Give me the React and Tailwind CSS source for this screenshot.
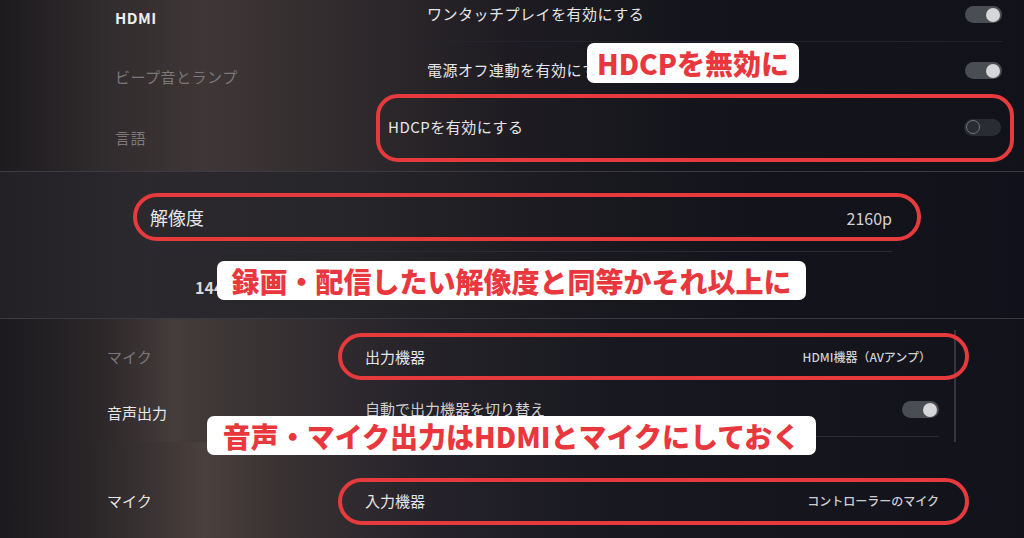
import React from 'react'

function Toggle({ on }) {
    if (on) {
        return (
            <div className="w-[37px] h-[17px] rounded-full bg-[#4b4d54] flex items-center justify-end pr-[2px] shrink-0">
                <div className="w-[14px] h-[14px] rounded-full bg-[#d6d6d8]"></div>
            </div>
        )
    }
    return (
        <div className="w-[37px] h-[17px] rounded-full bg-[#2a2c33] flex items-center pl-[2px] shrink-0">
            <div className="w-[14px] h-[14px] rounded-full border border-[#74767d]"></div>
        </div>
    )
}

function Callout({ className, children }) {
    return (
        <div className={`absolute bg-white rounded-[7px] flex items-center justify-center text-[28px] leading-none font-black text-[#e8383d] whitespace-nowrap ${className}`}>
            {children}
        </div>
    )
}

export default function App() {
    return (
        <div className="relative w-[1024px] h-[538px] overflow-hidden bg-[#11121a] font-['Noto_Sans_CJK_JP',sans-serif] text-[#e6e6e8]">
            {/* HDMI settings */}
            <section className="h-[171px] flex bg-[linear-gradient(90deg,#1d1b1e_0%,#302b2d_10%,#3f3737_20%,#322c2e_32%,#1e1c22_50%,#14151c_68%,#11121a_100%)]">
                <div className="w-[376px] pl-[115px] flex flex-col text-[15px] tracking-[0.5px]">
                    <div className="mt-[4px] h-[28px] flex items-center font-bold text-[#eeeeee]">HDMI</div>
                    <div className="mt-[31px] h-[28px] flex items-center text-[#7c7878]">ビープ音とランプ</div>
                    <div className="mt-[33px] h-[28px] flex items-center text-[#7c7878]">言語</div>
                </div>
                <div className="flex-1 flex flex-col text-[15px] tracking-[0.5px]">
                    <div className="ml-[51px] mr-[22px] h-[42px] pb-[12px] flex items-center justify-between border-b border-[#24252c]">
                        <span>ワンタッチプレイを有効にする</span>
                        <Toggle on />
                    </div>
                    <div className="ml-[51px] mr-[22px] h-[57px] flex items-center justify-between">
                        <span>電源オフ連動を有効にする</span>
                        <Toggle on />
                    </div>
                    <div className="ml-[12px] mr-[23px] h-[56px] flex items-center justify-between">
                        <span>HDCPを有効にする</span>
                        <Toggle />
                    </div>
                </div>
            </section>
            <div className="h-px bg-[#3a3a40]"></div>

            {/* Video output */}
            <section className="h-[146px] pl-[150px] pr-[132px] flex flex-col bg-[linear-gradient(90deg,#232125_0%,#2b292d_14%,#262529_35%,#1a1a20_55%,#13141b_75%,#10111a_100%)]">
                <div className="h-[80px] pt-[12px] flex items-center justify-between border-b border-[#2a2b32]">
                    <span className="text-[18px]">解像度</span>
                    <span className="text-[16px] text-[#d2d2d4]">2160p</span>
                </div>
                <div className="pl-[45px] h-[66px] pt-[4px] flex items-center text-[16px] font-semibold text-[#d8d8da]">1440p</div>
            </section>
            <div className="h-px bg-[#3a3a40]"></div>

            {/* Audio output */}
            <section className="h-[123px] flex bg-[linear-gradient(90deg,#1b1a1e_0%,#2c2729_10%,#453c3b_17%,#3a3434_24%,#26232a_40%,#181920_60%,#11121a_100%)]">
                <div className="w-[365px] pl-[107px] flex flex-col text-[15px]">
                    <div className="mt-[24px] h-[28px] flex items-center text-[#7c7878]">マイク</div>
                    <div className="mt-[28px] h-[28px] flex items-center">音声出力</div>
                </div>
                <div className="w-[574px] flex flex-col">
                    <div className="mt-[14px] h-[48px] flex items-center justify-between">
                        <span className="text-[15px]">出力機器</span>
                        <span className="text-[12px] font-medium text-[#cfcfd2] mr-[8px]">HDMI機器（AVアンプ）</span>
                    </div>
                    <div className="h-[56px] pt-[2px] flex items-center justify-between border-b border-[#2a2b33]">
                        <span className="text-[15px] text-[#d0d0d2]">自動で出力機器を切り替え</span>
                        <Toggle on />
                    </div>
                </div>
                <div className="ml-[15px] mt-[11px] w-[2px] bg-[#34363d]"></div>
            </section>

            {/* Microphone */}
            <section className="h-[96px] flex bg-[linear-gradient(90deg,#1c1a1e_0%,#2a2628_9%,#3e3636_16%,#4a403e_20%,#3a3333_27%,#25222a_42%,#181920_60%,#11121a_100%)]">
                <div className="w-[365px] pl-[107px] flex items-center text-[15px] pt-[22px]">マイク</div>
                <div className="w-[574px] flex items-center justify-between pt-[22px]">
                    <span className="text-[15px]">入力機器</span>
                    <span className="text-[12px] font-medium text-[#cfcfd2]">コントローラーのマイク</span>
                </div>
            </section>

            {/* Annotations */}
            <div className="absolute left-[376px] top-[94px] w-[638px] h-[68px] border-4 border-[#e63a3c] rounded-[22px]"></div>
            <div className="absolute left-[133px] top-[193px] w-[788px] h-[48px] border-4 border-[#e63a3c] rounded-[24px]"></div>
            <div className="absolute left-[338px] top-[333px] w-[631px] h-[47px] border-4 border-[#e63a3c] rounded-[24px]"></div>
            <div className="absolute left-[338px] top-[478px] w-[631px] h-[47px] border-4 border-[#e63a3c] rounded-[24px]"></div>

            <Callout className="left-[587px] top-[43px] w-[212px] h-[40px]">HDCPを無効に</Callout>
            <Callout className="left-[217px] top-[261px] w-[589px] h-[39px]">録画・配信したい解像度と同等かそれ以上に</Callout>
            <Callout className="left-[207px] top-[416px] w-[609px] h-[39px]">音声・マイク出力はHDMIとマイクにしておく</Callout>
        </div>
    )
}
